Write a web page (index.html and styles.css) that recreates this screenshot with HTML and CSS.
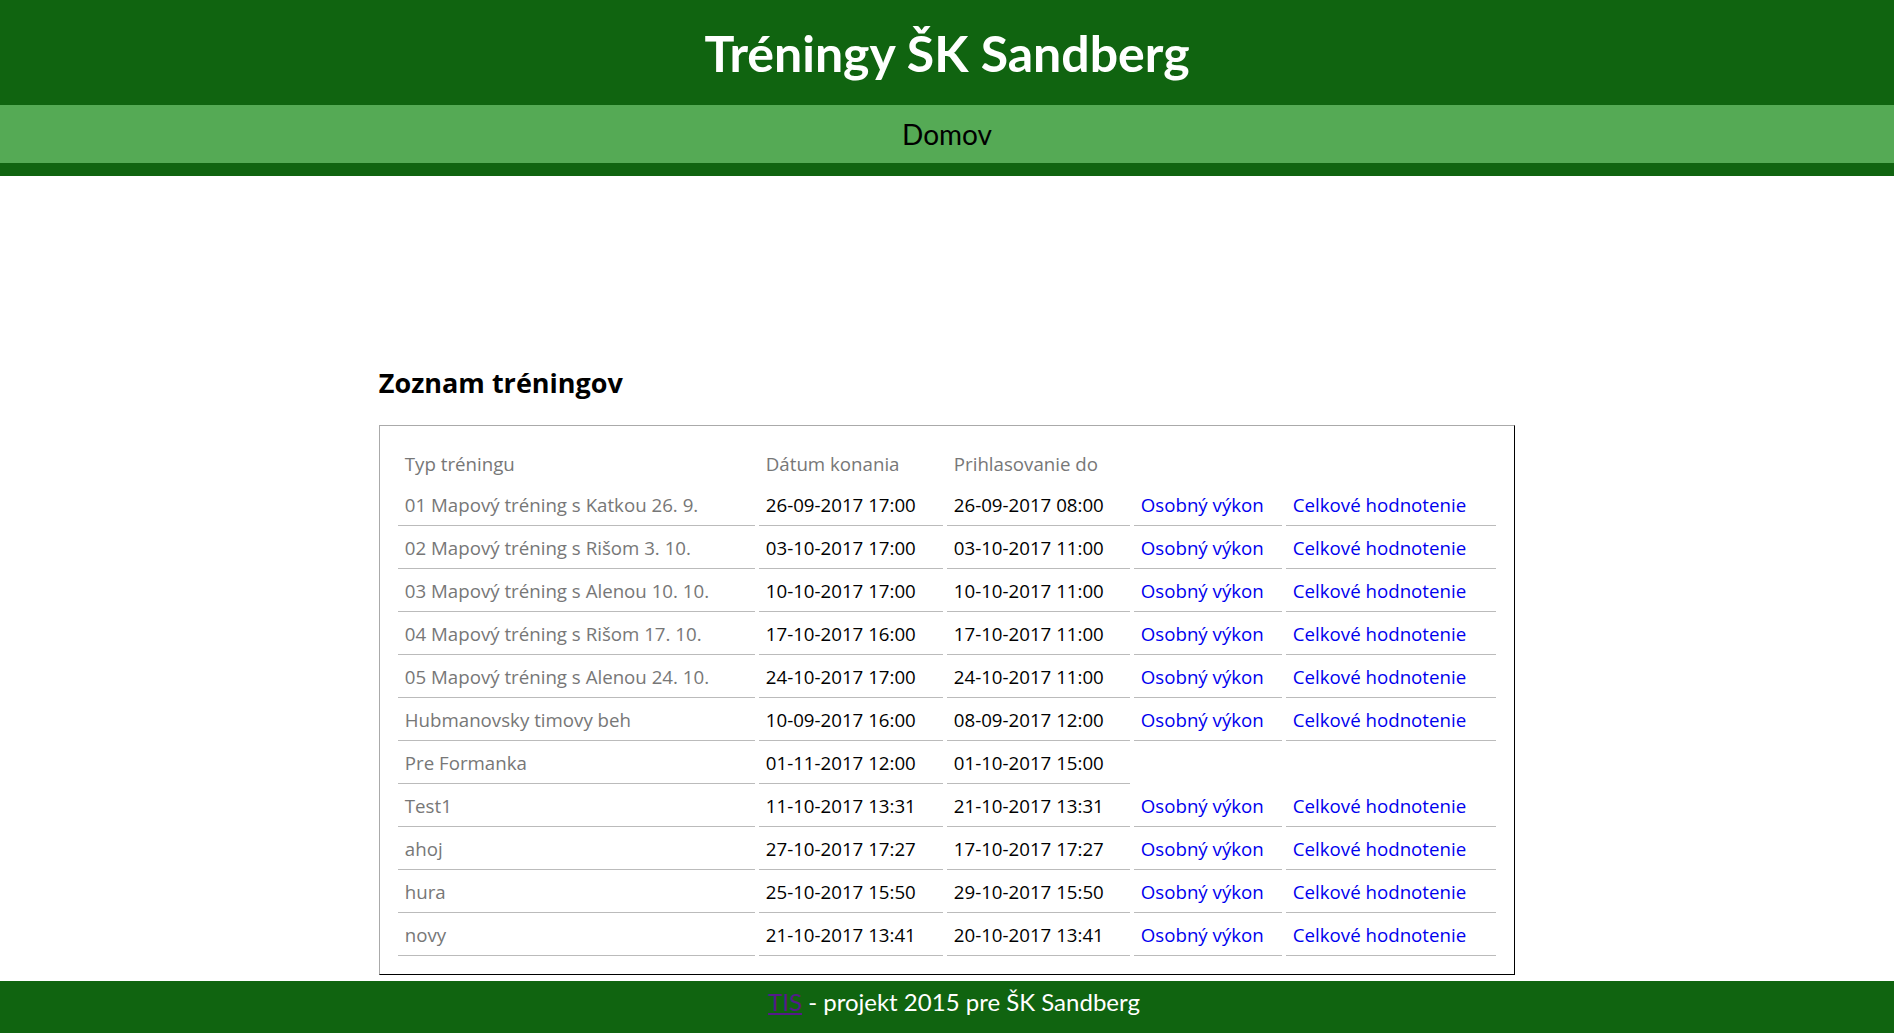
FILE: index.html
```html
<!DOCTYPE html>
<html lang="sk">
<head>
<meta charset="utf-8">
<title>Tréningy ŠK Sandberg</title>
<link rel="stylesheet" href="styles.css">
</head>
<body>
<header class="site-header">
  <h1 class="site-title">Tréningy ŠK Sandberg</h1>
</header>
<nav class="site-nav">
  <a class="nav-link" href="#">Domov</a>
</nav>
<main class="content">
  <h2 class="section-title">Zoznam tréningov</h2>
  <div class="panel">
    <table class="trainings">
      <colgroup>
        <col class="c-type">
        <col class="c-date">
        <col class="c-reg">
        <col class="c-own">
        <col class="c-all">
      </colgroup>
      <thead>
        <tr>
          <th>Typ tréningu</th>
          <th>Dátum konania</th>
          <th>Prihlasovanie do</th>
          <th></th>
          <th></th>
        </tr>
      </thead>
      <tbody>
        <tr><td class="type">01 Mapový tréning s Katkou 26. 9.</td><td>26-09-2017 17:00</td><td>26-09-2017 08:00</td><td><a href="#">Osobný výkon</a></td><td><a href="#">Celkové hodnotenie</a></td></tr>
        <tr><td class="type">02 Mapový tréning s Rišom 3. 10.</td><td>03-10-2017 17:00</td><td>03-10-2017 11:00</td><td><a href="#">Osobný výkon</a></td><td><a href="#">Celkové hodnotenie</a></td></tr>
        <tr><td class="type">03 Mapový tréning s Alenou 10. 10.</td><td>10-10-2017 17:00</td><td>10-10-2017 11:00</td><td><a href="#">Osobný výkon</a></td><td><a href="#">Celkové hodnotenie</a></td></tr>
        <tr><td class="type">04 Mapový tréning s Rišom 17. 10.</td><td>17-10-2017 16:00</td><td>17-10-2017 11:00</td><td><a href="#">Osobný výkon</a></td><td><a href="#">Celkové hodnotenie</a></td></tr>
        <tr><td class="type">05 Mapový tréning s Alenou 24. 10.</td><td>24-10-2017 17:00</td><td>24-10-2017 11:00</td><td><a href="#">Osobný výkon</a></td><td><a href="#">Celkové hodnotenie</a></td></tr>
        <tr><td class="type">Hubmanovsky timovy beh</td><td>10-09-2017 16:00</td><td>08-09-2017 12:00</td><td><a href="#">Osobný výkon</a></td><td><a href="#">Celkové hodnotenie</a></td></tr>
        <tr><td class="type">Pre Formanka</td><td>01-11-2017 12:00</td><td>01-10-2017 15:00</td></tr>
        <tr><td class="type">Test1</td><td>11-10-2017 13:31</td><td>21-10-2017 13:31</td><td><a href="#">Osobný výkon</a></td><td><a href="#">Celkové hodnotenie</a></td></tr>
        <tr><td class="type">ahoj</td><td>27-10-2017 17:27</td><td>17-10-2017 17:27</td><td><a href="#">Osobný výkon</a></td><td><a href="#">Celkové hodnotenie</a></td></tr>
        <tr><td class="type">hura</td><td>25-10-2017 15:50</td><td>29-10-2017 15:50</td><td><a href="#">Osobný výkon</a></td><td><a href="#">Celkové hodnotenie</a></td></tr>
        <tr><td class="type">novy</td><td>21-10-2017 13:41</td><td>20-10-2017 13:41</td><td><a href="#">Osobný výkon</a></td><td><a href="#">Celkové hodnotenie</a></td></tr>
      </tbody>
    </table>
  </div>
</main>
<footer class="site-footer">
  <a class="footer-link" href="#">TIS</a> - projekt 2015 pre ŠK Sandberg
</footer>
</body>
</html>
```
FILE: styles.css
```css
html, body {
  margin: 0;
  padding: 0;
}
body {
  font-family: Lato, "Open Sans", "DejaVu Sans", sans-serif;
  color: #000;
  background: #fff;
}
.site-header {
  height: 105px;
  background: #106410;
  display: flex;
  align-items: center;
  justify-content: center;
}
.site-title {
  margin: 0;
  color: #fff;
  font-size: 50px;
  font-weight: bold;
}
.site-nav {
  height: 58px;
  background: #55aa55;
  border-bottom: 13px solid #106410;
  display: flex;
  align-items: center;
  justify-content: center;
}
.nav-link {
  color: #000;
  text-decoration: none;
  font-size: 28px;
}
.content {
  padding-top: 192px;
}
.section-title {
  width: 60%;
  margin: 0 auto 27px;
  font-family: "Open Sans", Lato, sans-serif;
  font-size: 27px;
  line-height: 30px;
  font-weight: bold;
}
.panel {
  box-sizing: border-box;
  width: 60%;
  margin: 0 auto;
  padding: 17px 14px 14px;
  border: 1px solid #aaa;
  border-right-color: #000;
  border-bottom-color: #000;
}
.trainings {
  width: 100%;
  table-layout: fixed;
  border-spacing: 4px;
  border-collapse: separate;
  font-family: "Open Sans", Lato, sans-serif;
  font-size: 18.7px;
  line-height: 22px;
}
.c-type { width: 357px; }
.c-date { width: 184px; }
.c-reg { width: 183px; }
.c-own { width: 148px; }
.trainings th {
  text-align: left;
  font-weight: normal;
  color: #777;
  padding: 6px 7px 8px;
  white-space: nowrap;
}
.trainings td {
  padding: 7px 7px 9px;
  border-bottom: 1px solid #bbb;
  white-space: nowrap;
}
.trainings td.type {
  color: #777;
}
.trainings a {
  color: #0000ee;
  text-decoration: none;
}
.site-footer {
  box-sizing: border-box;
  height: 52px;
  margin-top: 6px;
  padding-top: 6px;
  padding-left: 14px;
  background: #106410;
  color: #fff;
  text-align: center;
  font-size: 24px;
  line-height: 29px;
}
.footer-link {
  color: #551a8b;
}
```
